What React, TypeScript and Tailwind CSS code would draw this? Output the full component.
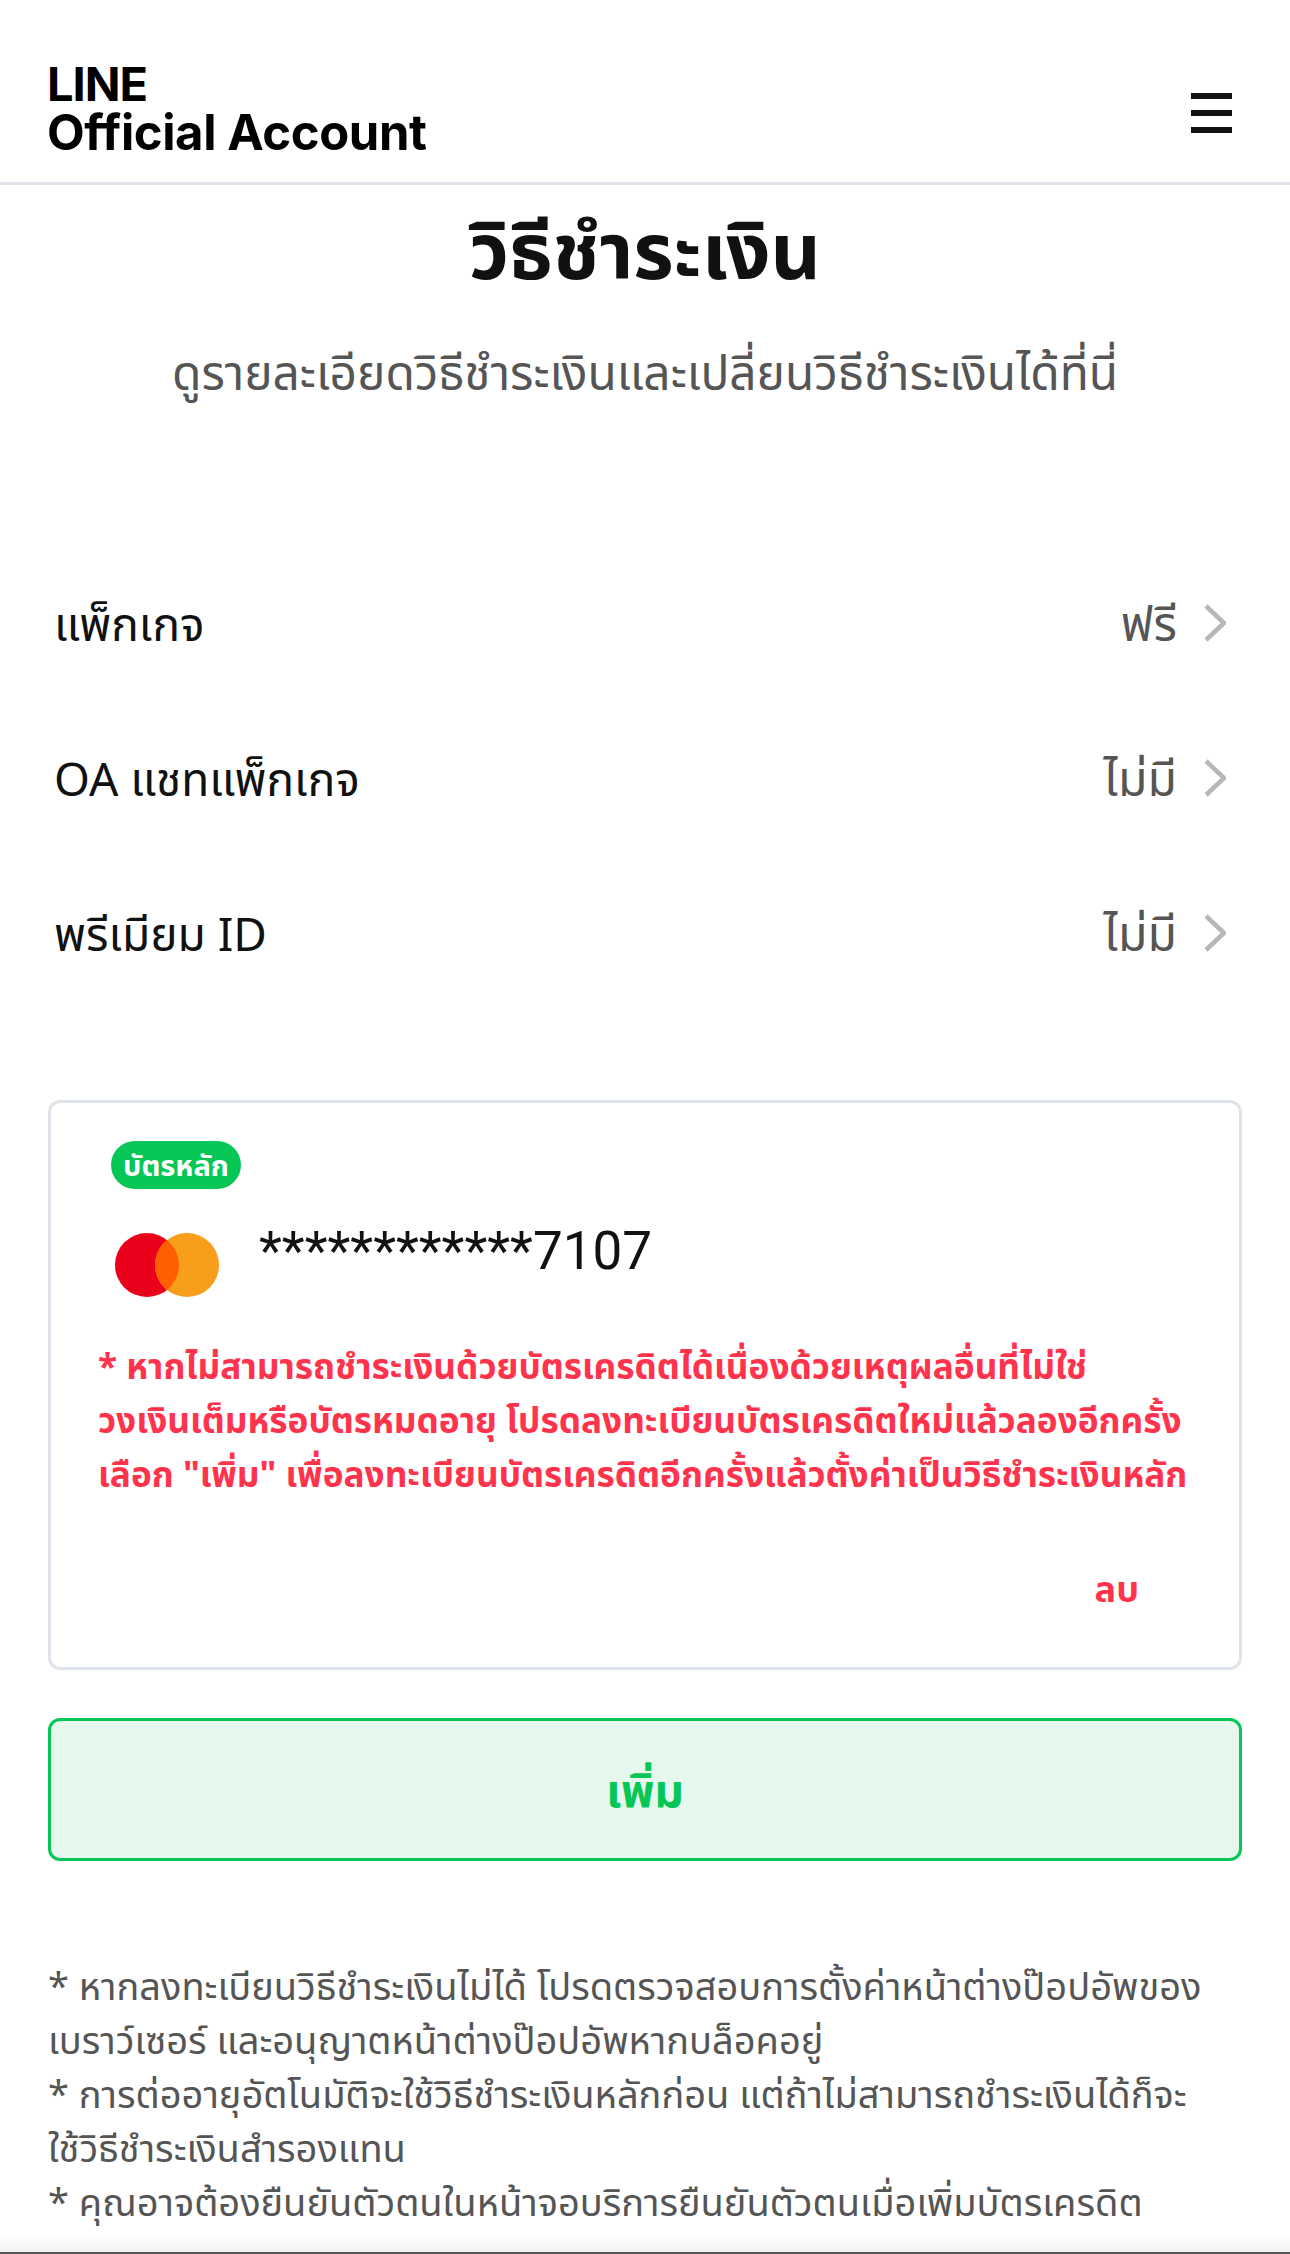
import React from "react";

const thai = "font-['Noto_Sans','Noto_Sans_Thai','Liberation_Sans','Noto_Sans_CJK_SC',sans-serif]";

function Row({ label, value }: { label: string; value: string }) {
  return (
    <div className="flex h-[155px] items-center justify-between pl-[54px] pr-[64px]">
      <span className="text-[46px] leading-[60px] text-[#111111]">{label}</span>
      <span className="flex items-center gap-[27px]">
        <span className="text-[48px] leading-[60px] text-[#555555]">{value}</span>
        <svg width="22" height="38" viewBox="0 0 22 38" fill="none">
          <path d="M2 2 L20 19 L2 36" stroke="#b7b7b7" strokeWidth="4.5" />
        </svg>
      </span>
    </div>
  );
}

export default function App() {
  return (
    <div className={`${thai} relative h-[2254px] w-[1290px] overflow-hidden bg-white`}>
      <header className="flex h-[185px] items-center justify-between border-b-[3px] border-[#dfe3ea] pl-[47px] pr-[58px]">
        <div className="mt-[33px] font-['Inter',sans-serif] font-bold text-black">
          <div className="text-[47px] leading-[49px] tracking-[-1px]">LINE</div>
          <div className="text-[49px] leading-[49px] tracking-[-0.4px]">Official Account</div>
        </div>
        <div className="mt-[44px] flex w-[41px] flex-col gap-[11px]">
          <div className="h-[6px] bg-[#111111]" />
          <div className="h-[6px] bg-[#111111]" />
          <div className="h-[6px] bg-[#111111]" />
        </div>
      </header>

      <h1 className="mt-[18px] text-center text-[78px] font-bold leading-[92px] text-[#111111]">วิธีชำระเงิน</h1>
      <p className="mt-[47px] text-center text-[47.8px] leading-[60px] text-[#555555]">
        ดูรายละเอียดวิธีชำระเงินและเปลี่ยนวิธีชำระเงินได้ที่นี่
      </p>

      <div className="mt-[143px]">
        <Row label="แพ็กเกจ" value="ฟรี" />
        <Row label="OA แชทแพ็กเกจ" value="ไม่มี" />
        <Row label="พรีเมียม ID" value="ไม่มี" />
      </div>

      <div className="mx-[48px] mt-[90px] h-[570px] rounded-[12px] border-[3px] border-[#dfe3ea] pl-[47px] pr-[20px] pt-[38px]">
        <div className="ml-[13px] inline-block h-[48px] rounded-full bg-[#06c755] px-[12px] text-[29px] font-bold leading-[48px] text-white">
          บัตรหลัก
        </div>
        <div className="ml-[17px] mt-[44px] flex items-start gap-[40px]">
          <svg width="104" height="64" viewBox="0 0 104 64">
            <circle cx="32" cy="32" r="32" fill="#eb001b" />
            <circle cx="72" cy="32" r="32" fill="#f79e1b" />
            <path d="M52 7 A32 32 0 0 1 52 57 A32 32 0 0 1 52 7 Z" fill="#ff5f00" />
          </svg>
          <span className="-mt-[12px] font-['Roboto',sans-serif] text-[53px] leading-[60px] text-[#111111]">************7107</span>
        </div>
        <p className="mt-[41px] whitespace-nowrap text-[35.2px] font-bold leading-[54px] text-[#ff334b]">
          * หากไม่สามารถชำระเงินด้วยบัตรเครดิตได้เนื่องด้วยเหตุผลอื่นที่ไม่ใช่
          <br />
          วงเงินเต็มหรือบัตรหมดอายุ โปรดลงทะเบียนบัตรเครดิตใหม่แล้วลองอีกครั้ง
          <br />
          เลือก "เพิ่ม" เพื่อลงทะเบียนบัตรเครดิตอีกครั้งแล้วตั้งค่าเป็นวิธีชำระเงินหลัก
        </p>
        <div className="mt-[64px] pr-[80px] text-right text-[36px] font-bold leading-[50px] text-[#ff334b]">ลบ</div>
      </div>

      <button className="mx-[48px] mt-[48px] flex h-[143px] w-[1194px] items-center justify-center rounded-[12px] border-[3px] border-[#06c755] bg-[#e6f8ee] text-[46px] font-bold text-[#06c755]">
        เพิ่ม
      </button>

      <p className="mx-[48px] mt-[97px] whitespace-nowrap text-[38px] leading-[54px] text-[#555555]">
        * หากลงทะเบียนวิธีชำระเงินไม่ได้ โปรดตรวจสอบการตั้งค่าหน้าต่างป๊อปอัพของ
        <br />
        เบราว์เซอร์ และอนุญาตหน้าต่างป๊อปอัพหากบล็อคอยู่
        <br />
        * การต่ออายุอัตโนมัติจะใช้วิธีชำระเงินหลักก่อน แต่ถ้าไม่สามารถชำระเงินได้ก็จะ
        <br />
        ใช้วิธีชำระเงินสำรองแทน
        <br />
        * คุณอาจต้องยืนยันตัวตนในหน้าจอบริการยืนยันตัวตนเมื่อเพิ่มบัตรเครดิต
      </p>
      <div className="absolute bottom-[2px] left-0 h-[18px] w-full bg-gradient-to-b from-white to-[#f3f3f3]" />
      <div className="absolute bottom-0 left-0 h-[2px] w-full bg-[#555555]" />
    </div>
  );
}
